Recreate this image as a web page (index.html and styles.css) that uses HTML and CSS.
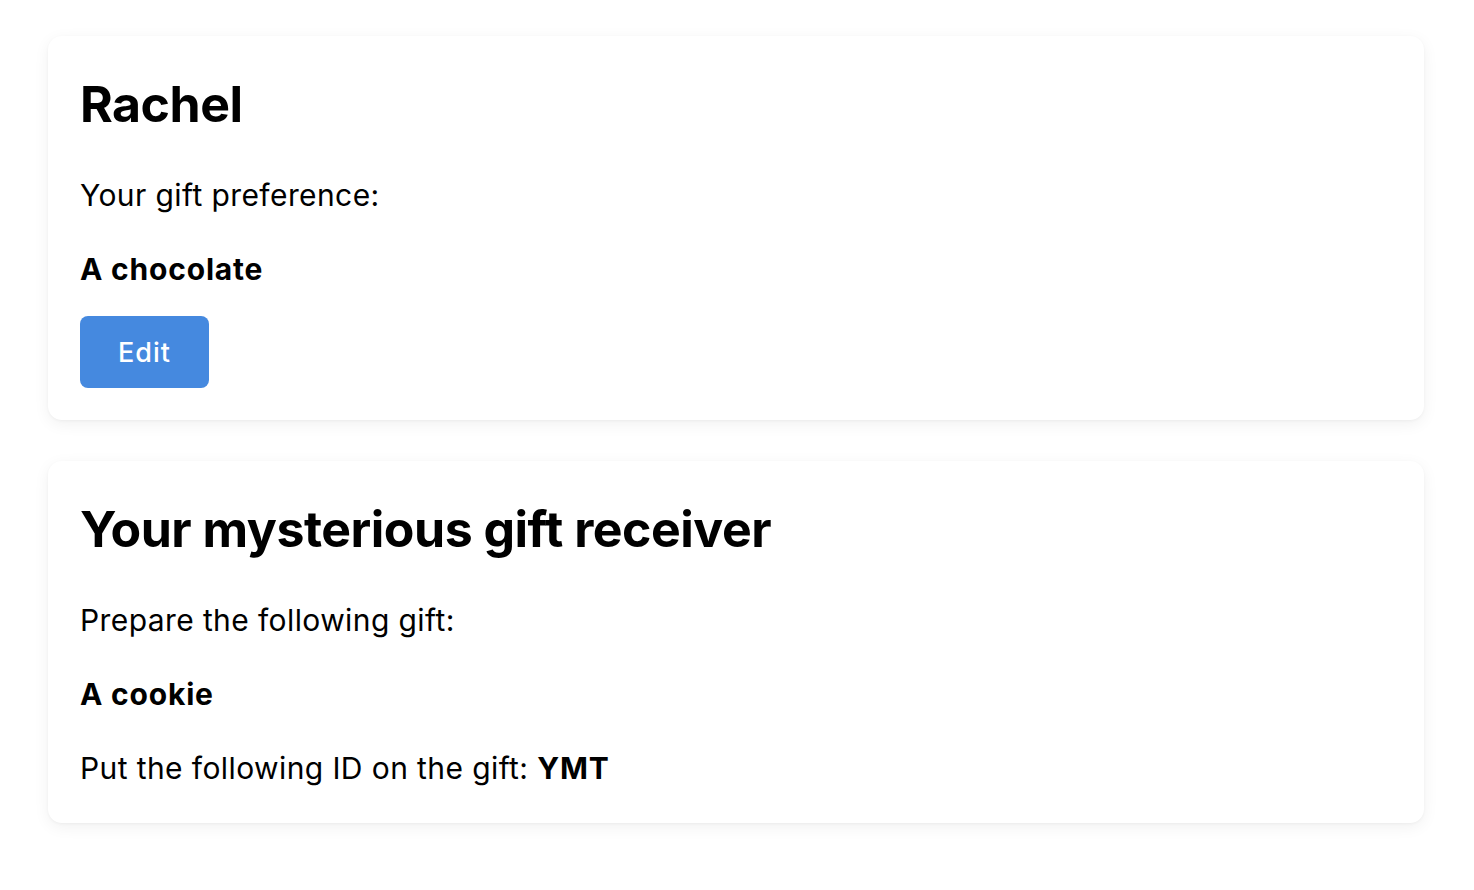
FILE: index.html
```html
<!DOCTYPE html>
<html lang="en">
<head>
<meta charset="utf-8">
<title>Gift exchange</title>
<link rel="stylesheet" href="styles.css">
</head>
<body>
<main class="page">
  <section class="card">
    <h1 class="card-title">Rachel</h1>
    <p class="text">Your gift preference:</p>
    <p class="text strong">A chocolate</p>
    <button class="btn" type="button">Edit</button>
  </section>
  <section class="card card-last">
    <h1 class="card-title">Your mysterious gift receiver</h1>
    <p class="text">Prepare the following gift:</p>
    <p class="text strong">A cookie</p>
    <p class="text">Put the following ID on the gift: <b class="id">YMT</b></p>
  </section>
</main>
</body>
</html>
```
FILE: styles.css
```css
* { box-sizing: border-box; }
html, body {
  margin: 0;
  background: #ffffff;
}
body {
  font-family: Inter, "Noto Sans", "Liberation Sans", sans-serif;
  color: #000;
}
.page {
  padding: 36px 50px 36px 48px;
  display: flex;
  flex-direction: column;
  gap: 41px;
}
.card {
  background: #fff;
  border-radius: 14px;
  padding: 38px 32px 32px;
  box-shadow: 0 4px 16px rgba(0, 0, 0, 0.06), 0 1px 3px rgba(0, 0, 0, 0.04);
  display: flex;
  flex-direction: column;
  align-items: flex-start;
}
.card-last { padding-bottom: 37px; }
.card-title {
  margin: 0;
  font-size: 50px;
  line-height: 60px;
  font-weight: 700;
  letter-spacing: -0.5px;
}
.text {
  margin: 0;
  font-size: 30px;
  line-height: 36px;
  font-weight: 400;
  letter-spacing: 0.4px;
}
.card-title + .text { margin-top: 43px; }
.text + .text { margin-top: 38px; }
.strong { font-weight: 700; letter-spacing: 0.8px; }
.id { font-weight: 700; letter-spacing: 0.8px; }
.btn {
  margin-top: 29px;
  width: 129px;
  height: 72px;
  border: none;
  border-radius: 8px;
  background: #4589df;
  color: #fff;
  font-family: inherit;
  font-size: 27px;
  font-weight: 500;
  letter-spacing: 1px;
  padding: 0;
}
```
